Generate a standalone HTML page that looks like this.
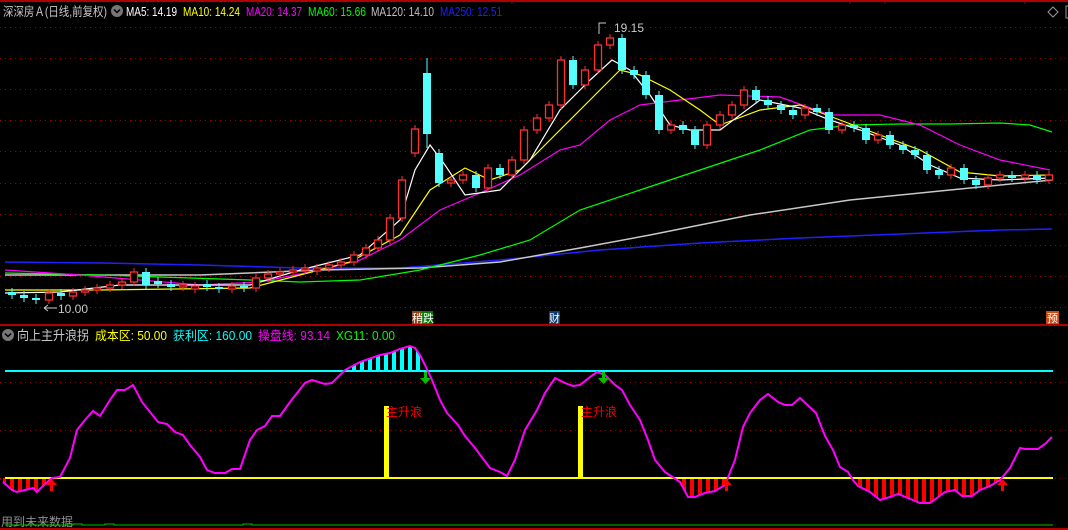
<!DOCTYPE html>
<html><head><meta charset="utf-8"><style>
html,body{margin:0;padding:0;background:#000;width:1068px;height:530px;overflow:hidden}
svg{display:block}
text{font-family:"Liberation Sans","Noto Sans CJK SC",sans-serif}
.u{fill:#000;stroke:#ff3030;stroke-width:1.3}
.d{fill:#55ffff}
</style></head><body>
<svg width="1068" height="530" viewBox="0 0 1068 530" xmlns="http://www.w3.org/2000/svg">
<defs>
<pattern id="pc" x="0" y="0" width="8" height="10" patternUnits="userSpaceOnUse"><rect x="0" y="0" width="4" height="10" fill="#00ffff"/></pattern>
<pattern id="pr" x="2" y="0" width="8" height="10" patternUnits="userSpaceOnUse"><rect x="0" y="0" width="4" height="10" fill="#ff0000"/></pattern>
</defs>
<rect width="1068" height="530" fill="#000"/>
<line x1="0" y1="1" x2="1068" y2="1" stroke="#b00000" stroke-width="2"/>
<g stroke="#b00000" stroke-width="1">
<line x1="50" y1="0" x2="50" y2="4"/><line x1="258" y1="0" x2="258" y2="4"/><line x1="512" y1="0" x2="512" y2="4"/><line x1="850" y1="0" x2="850" y2="4"/><line x1="885" y1="0" x2="885" y2="4"/><line x1="1025" y1="0" x2="1025" y2="4"/>
</g>
<g stroke="#9a0000" stroke-width="1" stroke-dasharray="1,4">
<line x1="0" y1="27.5" x2="1068" y2="27.5"/><line x1="0" y1="58.5" x2="1068" y2="58.5"/><line x1="0" y1="89.5" x2="1068" y2="89.5"/><line x1="0" y1="120.5" x2="1068" y2="120.5"/><line x1="0" y1="151.5" x2="1068" y2="151.5"/><line x1="0" y1="183.5" x2="1068" y2="183.5"/><line x1="0" y1="214.5" x2="1068" y2="214.5"/><line x1="0" y1="245.5" x2="1068" y2="245.5"/><line x1="0" y1="276.5" x2="1068" y2="276.5"/><line x1="0" y1="307.5" x2="1068" y2="307.5"/>
<line x1="0" y1="382.5" x2="1068" y2="382.5"/><line x1="0" y1="430.5" x2="1068" y2="430.5"/><line x1="0" y1="478.5" x2="1068" y2="478.5"/>
</g>
<line x1="0" y1="325" x2="1068" y2="325" stroke="#b00000" stroke-width="2"/>
<line x1="0" y1="529" x2="1068" y2="529" stroke="#b00000" stroke-width="2"/>

<g font-size="12.5">
<text x="3" y="16" fill="#c8c8c8" textLength="104" lengthAdjust="spacingAndGlyphs">深深房Ａ(日线,前复权)</text>
<text x="126" y="16" fill="#ffffff" textLength="51" lengthAdjust="spacingAndGlyphs">MA5: 14.19</text>
<text x="183" y="16" fill="#ffff00" textLength="57" lengthAdjust="spacingAndGlyphs">MA10: 14.24</text>
<text x="246" y="16" fill="#ff00ff" textLength="56" lengthAdjust="spacingAndGlyphs">MA20: 14.37</text>
<text x="308" y="16" fill="#00ff00" textLength="58" lengthAdjust="spacingAndGlyphs">MA60: 15.66</text>
<text x="371" y="16" fill="#c0c0c0" textLength="63" lengthAdjust="spacingAndGlyphs">MA120: 14.10</text>
<text x="440" y="16" fill="#2020ff" textLength="62" lengthAdjust="spacingAndGlyphs">MA250: 12.51</text>
</g>
<circle cx="117" cy="11" r="6" fill="#777"/>
<path d="M114 9.5 L117 12.5 L120 9.5" stroke="#000" stroke-width="1.5" fill="none"/>
<path d="M1053 7 L1058 12 L1053 17 L1048 12 Z" stroke="#999" fill="none"/>
<rect x="1066" y="6" width="6" height="12" stroke="#999" fill="none"/>

<g fill="none" stroke-width="1.2">
<polyline stroke="#2020ff" stroke-width="1.5" points="5,262 100,263 200,265 300,268 400,268 500,260 600,250 700,243 800,238 900,234 1000,230 1052,229"/>
<polyline stroke="#c8c8c8" stroke-width="1.5" points="5,275 200,275 320,270 420,268 500,262 580,248 650,235 750,215 850,200 950,190 1052,180"/>
<polyline stroke="#00ff00" points="5,273 100,275 250,280 300,282 360,280 420,270 480,255 530,240 580,210 640,190 700,170 760,150 810,130 850,125 900,124 950,124 1000,123 1030,125 1052,132"/>
<polyline stroke="#ff00ff" points="5,270 80,275 200,285 260,282 320,270 360,260 400,240 440,210 480,193 520,175 560,150 580,145 610,120 640,105 680,100 720,95 780,97 830,115 880,115 920,125 960,145 1000,160 1050,170"/>
<polyline stroke="#ffff00" points="5,290 100,290 250,288 300,275 350,262 400,235 430,190 465,168 490,180 520,170 550,140 590,100 620,70 640,75 670,90 700,110 720,125 760,110 800,105 840,120 880,135 920,150 960,172 1000,176 1050,175"/>
<polyline stroke="#ffffff" points="5,293 60,292 120,285 250,285 300,270 360,255 400,220 415,170 430,145 445,165 465,195 500,190 530,160 560,110 590,80 612,60 630,70 650,95 670,125 690,130 720,130 760,100 800,108 830,120 860,130 900,145 930,165 960,178 1000,180 1050,178"/>
</g>

<!-- candle wicks -->
<path fill="none" stroke="#ff3030" stroke-width="1" d="M49 289V304M73 288V300M85 286V296M97 284V294M110 281V292M122 278V289M134 268V286M183 281V291M195 282V293M232 282V293M256 274V292M268 270V282M280 268V278M293 266V276M305 264V274M317 264V275M329 261V272M341 258V269M354 251V266M366 244V259M378 236V252M390 214V244M402 176V222M415 125V157M451 176V187M463 171V184M488 164V192M512 156V179M524 126V164M537 114V134M549 101V122M561 56V109M585 66V89M598 41V74M610 34V49M671 121V134M707 121V149M720 111V129M732 101V119M744 86V109M805 104V119M842 121V134M878 131V144M951 164V179M988 174V189M1000 171V182M1025 171V182M1049 171V184"/>
<path fill="none" stroke="#55ffff" stroke-width="1" d="M12 288V299M24 291V302M36 294V304M61 289V300M146 268V289M158 277V288M171 280V291M207 280V291M219 283V293M244 282V292M427 58V148M439 149V187M476 171V192M500 164V179M573 56V89M622 34V74M634 66V79M646 71V99M659 91V134M683 121V134M695 126V149M756 86V104M768 96V109M781 101V114M793 106V119M817 104V116M829 108V134M854 121V132M866 124V144M890 131V149M903 141V154M915 146V159M927 151V174M939 166V179M964 164V184M976 176V189M1012 171V182M1037 171V184"/>
<g class="u">
<rect x="45.5" y="293" width="7" height="7"/><rect x="69.5" y="292" width="7" height="4"/><rect x="81.5" y="290" width="7" height="2"/><rect x="93.5" y="288" width="7" height="2"/><rect x="106.5" y="285" width="7" height="3"/><rect x="118.5" y="282" width="7" height="3"/><rect x="130.5" y="272" width="7" height="10"/><rect x="179.5" y="285" width="7" height="2"/><rect x="191.5" y="286" width="7" height="3"/><rect x="228.5" y="286" width="7" height="3"/><rect x="252.5" y="278" width="7" height="10"/><rect x="264.5" y="274" width="7" height="4"/><rect x="276.5" y="272" width="7" height="2"/><rect x="289.5" y="270" width="7" height="2"/><rect x="301.5" y="268" width="7" height="2"/><rect x="313.5" y="268" width="7" height="3"/><rect x="325.5" y="265" width="7" height="3"/><rect x="337.5" y="262" width="7" height="3"/><rect x="350.5" y="255" width="7" height="7"/><rect x="362.5" y="248" width="7" height="7"/><rect x="374.5" y="240" width="7" height="8"/><rect x="386.5" y="218" width="7" height="22"/><rect x="398.5" y="180" width="7" height="38"/><rect x="411.5" y="129" width="7" height="24"/><rect x="447.5" y="180" width="7" height="3"/><rect x="459.5" y="175" width="7" height="5"/><rect x="484.5" y="168" width="7" height="20"/><rect x="508.5" y="160" width="7" height="15"/><rect x="520.5" y="130" width="7" height="30"/><rect x="533.5" y="118" width="7" height="12"/><rect x="545.5" y="105" width="7" height="13"/><rect x="557.5" y="60" width="7" height="45"/><rect x="581.5" y="70" width="7" height="15"/><rect x="594.5" y="45" width="7" height="25"/><rect x="606.5" y="38" width="7" height="7"/><rect x="667.5" y="125" width="7" height="5"/><rect x="703.5" y="125" width="7" height="20"/><rect x="716.5" y="115" width="7" height="10"/><rect x="728.5" y="105" width="7" height="10"/><rect x="740.5" y="90" width="7" height="15"/><rect x="801.5" y="108" width="7" height="7"/><rect x="838.5" y="125" width="7" height="5"/><rect x="874.5" y="135" width="7" height="5"/><rect x="947.5" y="168" width="7" height="7"/><rect x="984.5" y="178" width="7" height="7"/><rect x="996.5" y="175" width="7" height="3"/><rect x="1021.5" y="175" width="7" height="3"/><rect x="1045.5" y="175" width="7" height="5"/>
</g>
<g class="d">
<rect x="8" y="292" width="8" height="3"/><rect x="20" y="295" width="8" height="3"/><rect x="32" y="298" width="8" height="2"/><rect x="57" y="293" width="8" height="3"/><rect x="142" y="272" width="8" height="13"/><rect x="154" y="281" width="8" height="3"/><rect x="167" y="284" width="8" height="3"/><rect x="203" y="284" width="8" height="3"/><rect x="215" y="287" width="8" height="2"/><rect x="240" y="286" width="8" height="2"/><rect x="423" y="73" width="8" height="61"/><rect x="435" y="153" width="8" height="30"/><rect x="472" y="175" width="8" height="13"/><rect x="496" y="168" width="8" height="7"/><rect x="569" y="60" width="8" height="25"/><rect x="618" y="38" width="8" height="32"/><rect x="630" y="70" width="8" height="5"/><rect x="642" y="75" width="8" height="20"/><rect x="655" y="95" width="8" height="35"/><rect x="679" y="125" width="8" height="5"/><rect x="691" y="130" width="8" height="15"/><rect x="752" y="90" width="8" height="10"/><rect x="764" y="100" width="8" height="5"/><rect x="777" y="105" width="8" height="5"/><rect x="789" y="110" width="8" height="5"/><rect x="813" y="108" width="8" height="4"/><rect x="825" y="112" width="8" height="18"/><rect x="850" y="125" width="8" height="3"/><rect x="862" y="128" width="8" height="12"/><rect x="886" y="135" width="8" height="10"/><rect x="899" y="145" width="8" height="5"/><rect x="911" y="150" width="8" height="5"/><rect x="923" y="155" width="8" height="15"/><rect x="935" y="170" width="8" height="5"/><rect x="960" y="168" width="8" height="12"/><rect x="972" y="180" width="8" height="5"/><rect x="1008" y="175" width="8" height="3"/><rect x="1033" y="175" width="8" height="5"/>
</g>

<text x="614" y="32" font-size="12" fill="#c8c8c8">19.15</text>
<path d="M599 34 L599 23 L606 23" stroke="#c8c8c8" fill="none"/>
<text x="58" y="313" font-size="12" fill="#c8c8c8">10.00</text>
<path d="M44 308 L57 308 M44 308 L48 305 M44 308 L48 311" stroke="#c8c8c8" fill="none"/>
<rect x="412" y="311" width="10" height="13" fill="#8b4513"/><rect x="422" y="311" width="11" height="13" fill="#007a00"/>
<text x="412" y="322" font-size="11" fill="#fff">稍跌</text>
<rect x="549" y="311" width="11" height="13" fill="#0d3c6e"/><text x="549" y="322" font-size="11" fill="#fff">财</text>
<rect x="1046" y="311" width="13" height="13" fill="#c84a10"/><text x="1047" y="322" font-size="11" fill="#fff">预</text>

<circle cx="8" cy="335" r="6" fill="#777"/>
<path d="M5 333.5 L8 336.5 L11 333.5" stroke="#000" stroke-width="1.5" fill="none"/>
<text x="17" y="340" font-size="13" fill="#c8c8c8" textLength="72" lengthAdjust="spacingAndGlyphs">向上主升浪拐</text>
<text x="95" y="340" font-size="12.5" fill="#ffff00" textLength="72" lengthAdjust="spacingAndGlyphs">成本区: 50.00</text>
<text x="173" y="340" font-size="12.5" fill="#00ffff" textLength="79" lengthAdjust="spacingAndGlyphs">获利区: 160.00</text>
<text x="258" y="340" font-size="12.5" fill="#ff00ff" textLength="72" lengthAdjust="spacingAndGlyphs">操盘线: 93.14</text>
<text x="336" y="340" font-size="12.5" fill="#00ff00" textLength="59" lengthAdjust="spacingAndGlyphs">XG11: 0.00</text>

<polygon fill="url(#pc)" points="343,371 345,370 360,362 380,355 390,353 400,349 410,346 415,348 420,355 423,371"/>
<polygon fill="url(#pr)" points="3,478 3,482 12,490 17,492 25,490 33,488 37,492 45,484 52,478"/>
<polygon fill="url(#pr)" points="672,478 680,482 688,497 695,497 705,493 715,491 725,485 728,478"/>
<polygon fill="url(#pr)" points="850,478 853,480 858,486 870,492 880,500 890,497 898,494 908,498 920,503 930,503 945,492 955,490 962,496 972,496 980,490 990,486 1000,480 1002,478"/>

<line x1="5" y1="371" x2="1053" y2="371" stroke="#00ffff" stroke-width="2"/>
<line x1="5" y1="478" x2="1053" y2="478" stroke="#ffff00" stroke-width="2"/>
<rect x="384" y="406" width="5" height="72" fill="#ffff00"/>
<rect x="578" y="406" width="5" height="72" fill="#ffff00"/>
<text x="386" y="416" font-size="12" fill="#ff0000">主升浪</text>
<text x="581" y="416" font-size="12" fill="#ff0000">主升浪</text>

<polyline fill="none" stroke="#ff00ff" stroke-width="2" points="3,482 12,490 17,492 25,490 33,488 37,492 45,484 52,478 60,477 70,458 77,430 85,420 93,411 100,416 110,400 117,390 125,390 133,385 142,402 158,422 167,424 175,432 183,435 190,445 200,457 207,470 215,473 225,473 232,469 240,469 250,440 257,430 265,426 272,416 280,416 290,402 305,383 312,380 325,384 332,383 345,370 360,362 380,355 390,353 400,349 410,346 415,348 420,355 425,365 432,380 440,400 447,413 458,425 465,436 475,448 490,468 500,472 507,476 515,460 525,430 537,410 545,393 555,378 565,383 573,386 580,385 590,377 597,372 605,375 615,385 622,390 630,405 640,420 648,440 655,460 665,472 680,482 688,497 695,497 705,493 715,491 725,485 735,460 743,427 750,413 760,400 768,394 778,402 785,405 792,405 800,398 816,413 825,436 833,450 840,467 848,472 853,480 858,486 870,492 880,500 890,497 898,494 908,498 920,503 930,503 945,492 955,490 962,496 972,496 980,490 990,486 1000,480 1010,468 1020,448 1025,449 1038,449 1045,444 1052,437"/>

<g fill="#00c000"><path d="M424 372 h3 v6 h4 l-5.5 6 l-5.5 -6 h4 z"/><path d="M602 372 h3 v6 h4 l-5.5 6 l-5.5 -6 h4 z"/></g>
<g fill="#ff0000"><path d="M50 491 h3 v-6 h4 l-5.5 -6 l-5.5 6 h4 z"/><path d="M725 491 h3 v-6 h4 l-5.5 -6 l-5.5 6 h4 z"/><path d="M1001 491 h3 v-6 h4 l-5.5 -6 l-5.5 6 h4 z"/></g>

<text x="1" y="526" font-size="12" fill="#909090">用到未来数据</text>
<polyline fill="none" stroke="#00c000" stroke-width="1" points="5,525 73,525 73,524 82,524 82,525 105,525 105,524 114,524 114,525 243,525 243,524 252,524 252,525 1053,525"/>
</svg>
</body></html>
